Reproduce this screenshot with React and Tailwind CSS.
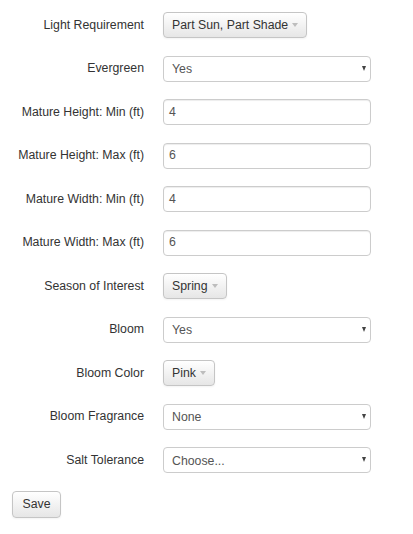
import React from 'react';

const font = { fontFamily: '"Liberation Sans", Arial, sans-serif' };

function Caret() {
    return <span className="inline-block ml-[4px] w-0 h-0 border-x-[3.5px] border-x-transparent border-t-[4px] border-t-[#bdbdbd] align-middle" />;
}

function DropButton({ label }) {
    return (
        <button className="h-[26px] px-[8px] rounded-[4px] border border-[#c5c5c5] bg-gradient-to-b from-white to-[#e6e6e6] text-[12.3px] text-[#333] shadow-[0_1px_2px_rgba(0,0,0,0.05)] flex items-center">
            {label}
            <Caret />
        </button>
    );
}

function Select({ value }) {
    return (
        <div className="relative w-[208px] h-[26px]">
            <div className="w-full h-full rounded-[4px] border border-[#ccc] bg-white text-[12.3px] text-[#555] pl-[8px] flex items-center pt-[2px]">
                {value}
            </div>
            <span className="absolute right-[5px] top-[10px] w-0 h-0 border-x-[2.5px] border-x-transparent border-t-[5px] border-t-[#444]" />
        </div>
    );
}

function TextInput({ value }) {
    return (
        <div className="w-[208px] h-[26px] rounded-[4px] border border-[#ccc] bg-white text-[12.3px] text-[#555] pl-[5px] flex items-center shadow-[inset_0_1px_1px_rgba(0,0,0,0.075)]">
            {value}
        </div>
    );
}

const rows = [
    ['Light Requirement', 'drop', 'Part Sun, Part Shade'],
    ['Evergreen', 'select', 'Yes'],
    ['Mature Height: Min (ft)', 'input', '4'],
    ['Mature Height: Max (ft)', 'input', '6'],
    ['Mature Width: Min (ft)', 'input', '4'],
    ['Mature Width: Max (ft)', 'input', '6'],
    ['Season of Interest', 'drop', 'Spring'],
    ['Bloom', 'select', 'Yes'],
    ['Bloom Color', 'drop', 'Pink'],
    ['Bloom Fragrance', 'select', 'None'],
    ['Salt Tolerance', 'select', 'Choose...'],
];

export default function App() {
    return (
        <div className="w-[413px] h-[534px] bg-white pt-[12px] flex flex-col gap-[17.5px]" style={font}>
            {rows.map(([label, kind, value]) => (
                <div key={label} className="flex items-center h-[26px]">
                    <label className="w-[144px] text-right text-[12.3px] text-[#333]">{label}</label>
                    <div className="ml-[19px]">
                        {kind === 'drop' && <DropButton label={value} />}
                        {kind === 'select' && <Select value={value} />}
                        {kind === 'input' && <TextInput value={value} />}
                    </div>
                </div>
            ))}
            <div className="pl-[12px]">
                <button className="h-[27px] w-[49px] rounded-[4px] border border-[#c5c5c5] bg-gradient-to-b from-white to-[#e6e6e6] text-[12.3px] text-[#333] shadow-[0_1px_2px_rgba(0,0,0,0.05)]">
                    Save
                </button>
            </div>
        </div>
    );
}
